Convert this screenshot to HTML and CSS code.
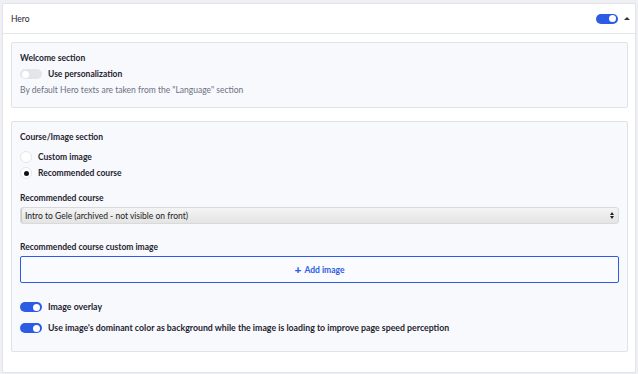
FILE: index.html
```html
<!DOCTYPE html>
<html>
<head>
<meta charset="utf-8">
<link rel="stylesheet" href="styles.css">
</head>
<body>
<div class="card">
  <div class="card-header">
    <span class="title">Hero</span>
    <div class="header-actions">
      <span class="toggle on"><span class="knob"></span></span>
      <span class="caret"></span>
    </div>
  </div>
  <div class="card-body">
    <section class="panel panel-welcome">
      <div class="panel-title">Welcome section</div>
      <div class="switch-row">
        <span class="toggle off"><span class="knob"></span></span>
        <span class="switch-label">Use personalization</span>
      </div>
      <div class="hint">By default Hero texts are taken from the "Language" section</div>
    </section>
    <section class="panel panel-course">
      <div class="panel-title">Course/Image section</div>
      <div class="radios">
        <div class="radio-row"><span class="radio"></span><span class="radio-label">Custom image</span></div>
        <div class="radio-row"><span class="radio checked"></span><span class="radio-label">Recommended course</span></div>
      </div>
      <div class="field">
        <div class="field-label">Recommended course</div>
        <div class="select">
          <span class="select-text">Intro to Gele (archived - not visible on front)</span>
          <span class="select-arrows"><span class="up"></span><span class="down"></span></span>
        </div>
      </div>
      <div class="field">
        <div class="field-label">Recommended course custom image</div>
        <div class="add-btn"><span class="plus">+</span> Add image</div>
      </div>
      <div class="switches">
        <div class="switch-row">
          <span class="toggle on"><span class="knob"></span></span>
          <span class="switch-label">Image overlay</span>
        </div>
        <div class="switch-row">
          <span class="toggle on"><span class="knob"></span></span>
          <span class="switch-label">Use image's dominant color as background while the image is loading to improve page speed perception</span>
        </div>
      </div>
    </section>
  </div>
</div>
</body>
</html>
```

FILE: styles.css
```css
* { box-sizing: border-box; }
html, body { margin: 0; padding: 0; }
body {
  background: #eff0f4;
  font-family: "Lato", "Open Sans", sans-serif;
  font-size: 8.5px;
  color: #1f2430;
  width: 638px;
  height: 374px;
  overflow: hidden;
  padding: 3px 2px 0 2px;
}
.card {
  background: #fff;
  border: 1px solid #e2e4e9;
  border-radius: 2px;
  height: 370px;
}
.card-header {
  height: 30px;
  display: flex;
  align-items: center;
  justify-content: space-between;
  padding: 0 5px 0 8px;
  border-bottom: 1px solid #e4e6eb;
}
.title { font-size: 8.5px; color: #1f2430; }
.header-actions { display: flex; align-items: center; gap: 4px; }
.caret {
  width: 0; height: 0;
  border-left: 3px solid transparent;
  border-right: 3px solid transparent;
  border-bottom: 3px solid #333;
  margin-left: 2px;
}
.toggle {
  width: 22px;
  height: 10px;
  border-radius: 5px;
  display: inline-flex;
  align-items: center;
  padding: 0 2px;
  flex: none;
}
.toggle .knob {
  width: 7px; height: 7px;
  border-radius: 50%;
  background: #fff;
}
.toggle.on { background: #2c5be4; justify-content: flex-end; }
.toggle.off { background: #e3e5ea; justify-content: flex-start; }
.card-body {
  padding: 8px 7px 19px 8px;
  display: flex;
  flex-direction: column;
  gap: 13px;
}
.panel {
  background: #f8f9fd;
  border: 1px solid #e0e2e8;
  border-radius: 2px;
  padding: 9px 8px 0 8px;
}
.panel-welcome { height: 66px; }
.panel-course { height: 231px; }
.panel-title { font-weight: 700; font-size: 8.5px; line-height: 12px; }
.switch-row { display: flex; align-items: center; gap: 6px; }
.panel-welcome .switch-row { margin-top: 4px; }
.switch-label { font-weight: 700; line-height: 12px; }
.hint { color: #6b7184; margin-top: 4px; line-height: 12px; }
.radios { display: flex; flex-direction: column; gap: 4px; margin-top: 8px; }
.radio-row { display: flex; align-items: center; gap: 6px; height: 12px; }
.radio {
  width: 12px; height: 12px; border-radius: 50%;
  background: #fff;
  border: 1px solid #e3e5ea;
  display: inline-flex; align-items: center; justify-content: center;
  flex: none;
}
.radio.checked::after {
  content: "";
  width: 5px; height: 5px; border-radius: 50%;
  background: #111;
}
.radio-label { font-weight: 700; line-height: 12px; }
.field { margin-top: 13px; }
.field-label { font-weight: 700; line-height: 12px; margin-bottom: 3px; }
.select {
  height: 17px;
  border: 1px solid #d9dadd;
  border-radius: 3px;
  background: linear-gradient(#f4f4f4, #e4e4e4);
  display: flex; align-items: center; justify-content: space-between;
  padding: 0 4px 0 4px;
  box-shadow: inset 1px 0 0 #c8c8c8;
}
.select-text { color: #222; font-size: 8.5px; }
.select-arrows { display: flex; flex-direction: column; gap: 1px; }
.select-arrows .up, .select-arrows .down {
  width: 0; height: 0;
  border-left: 2px solid transparent;
  border-right: 2px solid transparent;
}
.select-arrows .up { border-bottom: 3px solid #222; }
.select-arrows .down { border-top: 3px solid #222; }
.field + .field { margin-top: 17px; }
.add-btn {
  height: 27px;
  border: 1px solid #2c5be4;
  border-radius: 2px;
  background: #fafbfe;
  color: #2c5be4;
  font-weight: 700;
  display: flex; align-items: center; justify-content: center;
  gap: 3px;
}
.plus { font-size: 12px; font-weight: 900; line-height: 1; }
.switches { display: flex; flex-direction: column; gap: 9px; margin-top: 18px; }
.switches .switch-row { height: 12px; }
.switches .switch-label { font-weight: 700; font-size: 8.75px; }
```
